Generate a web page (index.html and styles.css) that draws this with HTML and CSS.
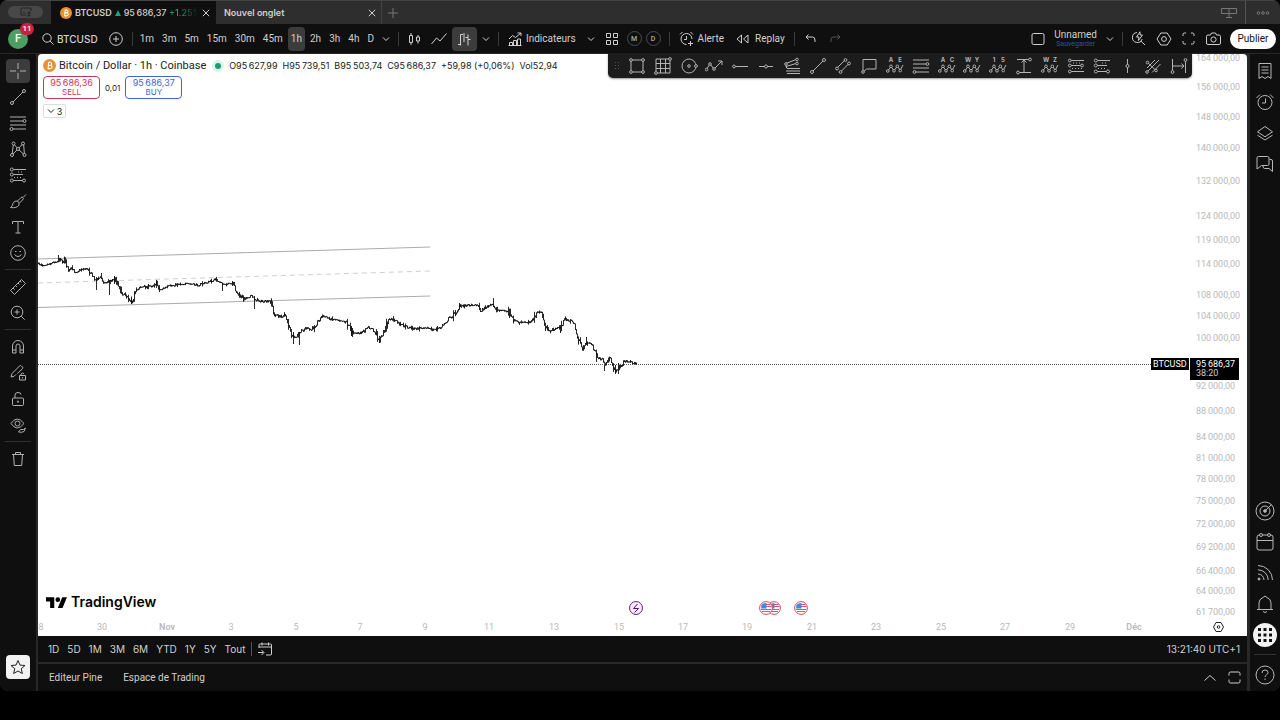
FILE: index.html
```html
<!DOCTYPE html>
<html lang="fr">
<head>
<meta charset="utf-8">
<title>BTCUSD 95 686,37</title>
<link rel="stylesheet" href="styles.css">
</head>
<body>
<svg class="defs" aria-hidden="true">
  <symbol id="chev" viewBox="0 0 8 8"><path d="M1 2.500l3 3 3-3"/></symbol>
  <symbol id="close" viewBox="0 0 8 8"><path d="M.8.8l6.400 6.400M7.200.8L.8 7.200"/></symbol>
  <symbol id="wave" viewBox="0 0 18 18"><path d="M1.500 14.200L5 9.600l3 4 3.400-4.400 2.800 4L17 8"/><g class="dot"><circle cx="1.800" cy="14" r="1.300"/><circle cx="5" cy="9.300" r="1.300"/><circle cx="8" cy="13.800" r="1.300"/><circle cx="11.300" cy="9.300" r="1.300"/><circle cx="14.200" cy="13.600" r="1.300"/></g></symbol>
  <symbol id="fib" viewBox="0 0 18 18"><path d="M1 3h16M1 7h13M1 11h16M4 15h13"/><g class="dot"><circle cx="15.500" cy="7" r="1.500"/><circle cx="2.500" cy="15" r="1.500"/></g></symbol>
  <symbol id="trend" viewBox="0 0 18 18"><path d="M3.500 14.500l11-11"/><g class="dot"><circle cx="3" cy="15" r="1.500"/><circle cx="15" cy="3" r="1.500"/></g></symbol>
  <symbol id="proj" viewBox="0 0 18 18"><path d="M4 3.500h13M4 8.500h10M4 14.500h10"/><path d="M5 11.500h9M9 6h6" stroke-dasharray="1 2"/><g class="dot"><circle cx="2.800" cy="3.500" r="1.500"/><circle cx="2.800" cy="8.500" r="1.500"/><circle cx="2.800" cy="14.500" r="1.500"/><circle cx="15" cy="14.500" r="1.500"/></g></symbol>
  <symbol id="hex" viewBox="0 0 16 16"><path d="M4.800 2h6.400L15 8l-3.800 6H4.800L1 8z"/><circle cx="8" cy="8" r="2.400"/></symbol>
  <symbol id="btc" viewBox="0 0 12 12"><circle cx="6" cy="6" r="6" fill="#e8922e" stroke="none"/><path d="M4.800 3.200h1.900a1.200 1.200 0 010 2.600H4.600h2.300a1.400 1.400 0 010 2.900H4.200M5.200 3.200L4.700 8.700M6.200 2.200v1M5.600 8.700v1" stroke="#fff"/></symbol>
  <symbol id="flag" viewBox="0 0 14 14"><circle cx="7" cy="7" r="6.400" fill="#fff" stroke="#d9485c"/><path d="M7 3.500h4.500M7 5.500h5.500M2 8.500h10M3 10.500h8" stroke="#e0526a"/><path d="M2.500 3.800Q4 2 7.500 2v5.500H2z" fill="#3f8ae0" stroke="none"/></symbol>
</svg>

<div class="app">
  <header class="tabs">
    <button class="home" aria-label="Fenêtres"><svg width="12" height="10" viewBox="0 0 12 10"><path d="M11 4V1H1v7h5M3 5.500h2"/><circle cx="9" cy="6" r="1.200"/><path d="M7 9.500q2-3 4 0"/></svg></button>
    <div class="tab active">
      <svg width="12" height="12"><use href="#btc"/></svg>
      <span>BTCUSD</span><i class="up"></i><span class="tabprice">95&#8201;686,37 <em>+1.25%</em></span>
      <button class="x" aria-label="Fermer"><svg width="8" height="8"><use href="#close"/></svg></button>
    </div>
    <div class="tab other"><span class="grow">Nouvel onglet</span>
      <button class="x" aria-label="Fermer"><svg width="8" height="8"><use href="#close"/></svg></button>
    </div>
    <button class="newtab" aria-label="Nouvel onglet"><svg width="10" height="10" viewBox="0 0 10 10"><path d="M5 0v10M0 5h10"/></svg></button>
    <span class="grow"></span>
    <button class="layout" aria-label="Disposition"><svg width="16" height="12" viewBox="0 0 16 12"><path d="M.5 1.500h15v5H.5zM8 1.500v9M5 10.500h6"/></svg></button>
    <button class="more" aria-label="Plus"><svg width="14" height="6" viewBox="0 0 14 6"><circle cx="2.500" cy="3" r="1.300"/><circle cx="7" cy="3" r="1.300"/><circle cx="11.500" cy="3" r="1.300"/></svg></button>
  </header>

  <nav class="bar">
    <button class="avatar" aria-label="Profil">F<b>11</b></button>
    <button class="symbol"><svg width="12" height="12" viewBox="0 0 12 12"><circle cx="5" cy="5" r="4.200"/><path d="M8 8l3.500 3.500"/></svg>BTCUSD</button>
    <button class="ib" aria-label="Comparer"><svg width="14" height="14" viewBox="0 0 14 14"><circle cx="7" cy="7" r="6.300"/><path d="M7 4v6M4 7h6"/></svg></button>
    <i class="sep"></i>
    <div class="intervals">
      <button>1m</button><button>3m</button><button>5m</button><button>15m</button><button>30m</button><button>45m</button><button class="on">1h</button><button>2h</button><button>3h</button><button>4h</button><button>D</button>
    </div>
    <button class="cv" aria-label="Intervalles"><svg width="8" height="8"><use href="#chev"/></svg></button>
    <i class="sep"></i>
    <button class="ib" aria-label="Bougies"><svg width="14" height="16" viewBox="0 0 14 16"><path d="M2.500 4.500h3v7h-3zM4 2v2.500M4 11.500V14M9.500 6h3v4h-3zM11 4v2M11 10v2.500"/></svg></button>
    <button class="ib" aria-label="Ligne"><svg width="16" height="12" viewBox="0 0 16 12"><path d="M.5 11l5-6 3.500 3 6.500-7.500"/></svg></button>
    <button class="ib on" aria-label="Barres"><svg width="14" height="14" viewBox="0 0 14 14"><path d="M1 12.500h2.500M3.500 13.500V2.500M3.500 2.500H6M7 1v9M11 2.500v11M8.500 5.500H11M11 7.500h2.500"/></svg></button>
    <button class="cv" aria-label="Style"><svg width="8" height="8"><use href="#chev"/></svg></button>
    <i class="sep"></i>
    <button class="txt"><svg width="14" height="14" viewBox="0 0 14 14"><path d="M1 7l3.500-3.500 3 2L13 1M9.500 1H13v3M1.500 13.500v-3h3v3M5.500 13.500v-5h3v5M9.500 13.500V7h3v6.500M.5 13.500h13"/></svg>Indicateurs</button>
    <button class="cv" aria-label="Favoris"><svg width="8" height="8"><use href="#chev"/></svg></button>
    <button class="ib" aria-label="Modèles"><svg width="12" height="12" viewBox="0 0 12 12"><path d="M.5.5h4v4h-4zM7.500.5h4v4h-4zM.5 7.500h4v4h-4zM7.500 7.500h4v4h-4z"/></svg></button>
    <div class="rounds"><button class="round">M</button><button class="round">D</button></div>
    <i class="sep"></i>
    <button class="txt"><svg width="15" height="15" viewBox="0 0 15 15"><path d="M13 8A5.500 5.500 0 107.500 13.500M7.500 5v3.500H5M1 3.500L3.500 1M11.500 1L14 3.500M11.500 10v5M9 12.500h5"/></svg>Alerte</button>
    <button class="txt replay"><svg width="13" height="10" viewBox="0 0 13 10"><path d="M5.500 1v8L1 5zM12 1v8L7.500 5z"/></svg>Replay</button>
    <i class="sep"></i>
    <button class="ib" aria-label="Annuler"><svg width="11" height="10" viewBox="0 0 11 10"><path d="M3.500.5L1 3l2.500 2.500M1 3h6.500q2.500 0 2.500 3v2"/></svg></button>
    <button class="ib dim" aria-label="Rétablir"><svg width="11" height="10" viewBox="0 0 11 10"><path d="M7.500.5L10 3 7.500 5.500M10 3H3.500Q1 3 1 6v2"/></svg></button>
    <span class="grow"></span>
    <button class="ib" aria-label="Disposition"><svg width="14" height="14" viewBox="0 0 14 14"><rect x="1" y="1.500" width="12" height="11" rx="1.500"/></svg></button>
    <button class="save">Unnamed<small>Sauvegarder</small></button>
    <button class="cv" aria-label="Dispositions"><svg width="8" height="8"><use href="#chev"/></svg></button>
    <i class="sep"></i>
    <button class="ib" aria-label="Recherche rapide"><svg width="15" height="15" viewBox="0 0 15 15"><path d="M6 1.500a5 5 0 105.200 6.500M9.800 10L14 14M9 .8L5.500 6H8l-.6 3.500L11.500 4H9z"/></svg></button>
    <button class="ib" aria-label="Paramètres"><svg width="16" height="16"><use href="#hex"/></svg></button>
    <button class="ib" aria-label="Plein écran"><svg width="13" height="13" viewBox="0 0 13 13"><path d="M1 4V2.500Q1 1 2.500 1H4M9 1h1.500Q12 1 12 2.500V4M12 9v1.500q0 1.500-1.500 1.500H9M4 12H2.500Q1 12 1 10.500V9"/></svg></button>
    <button class="ib" aria-label="Capture"><svg width="15" height="13" viewBox="0 0 15 13"><path d="M2 3h2.500l1-2h4l1 2H13q1.500 0 1.500 1.500V11q0 1.500-1.500 1.500H2Q.5 12.500.5 11V4.500Q.5 3 2 3z"/><circle cx="7.500" cy="7.500" r="2.600"/></svg></button>
    <button class="publish">Publier</button>
  </nav>

  <div class="body">
    <aside class="left">
      <button class="on" aria-label="Curseur"><svg width="18" height="18" viewBox="0 0 18 18"><path d="M9 1v6M9 11v6M1 9h6M11 9h6"/></svg></button>
      <button aria-label="Lignes"><svg width="18" height="18"><use href="#trend"/></svg></button>
      <button aria-label="Fibonacci"><svg width="18" height="18"><use href="#fib"/></svg></button>
      <button aria-label="Figures"><svg width="18" height="18" viewBox="0 0 18 18"><path d="M3 15L4.500 3.500 9 9l5.500-6L15.500 15 9 9z"/><g class="dot"><circle cx="3" cy="15" r="1.500"/><circle cx="4.500" cy="3.500" r="1.500"/><circle cx="9" cy="9" r="1.500"/><circle cx="14" cy="3.500" r="1.500"/><circle cx="15.500" cy="15" r="1.500"/></g></svg></button>
      <button aria-label="Prévisions"><svg width="18" height="18"><use href="#proj"/></svg></button>
      <button aria-label="Pinceau"><svg width="18" height="18" viewBox="0 0 18 18"><path d="M1.500 15.500q2-1 2.500-4 1-3 4-2.500 3 1 2 4-2 3.500-8.500 2.500zM8.500 9L12 5.500q1-1 2 0t-.5 2.500L10.500 11M14.500 5l2.500-2.500"/></svg></button>
      <button aria-label="Texte"><svg width="18" height="18" viewBox="0 0 18 18"><path d="M3.500 6V3.500h11V6M9 3.500v11.500M6.500 15h5"/></svg></button>
      <button aria-label="Icônes"><svg width="18" height="18" viewBox="0 0 18 18"><circle cx="9" cy="9" r="7.300"/><path d="M5.500 10.500q3.500 4 7 0M6 7.500h1.500M10.500 7.500H12"/></svg></button>
      <i></i>
      <button aria-label="Mesure"><svg width="18" height="18" viewBox="0 0 18 18"><path d="M1.500 12.500l11-11 4 4-11 11zM4 10l1.500 1.500M6.500 7.500L8 9M9 5l1.500 1.500M11 3l1.500 1.500"/></svg></button>
      <button aria-label="Zoom"><svg width="18" height="18" viewBox="0 0 18 18"><circle cx="8" cy="8" r="5.800"/><path d="M12.200 12.200l3.500 3.500M8 5.500v5M5.500 8h5"/></svg></button>
      <i></i>
      <button aria-label="Aimant"><svg width="18" height="18" viewBox="0 0 18 18"><path d="M3.500 15V8a5.500 5.500 0 0111 0v7h-3.500V8a2 2 0 00-4 0v7zM3.500 12H7M11 12h3.500"/></svg></button>
      <button aria-label="Mode dessin"><svg width="18" height="18" viewBox="0 0 18 18"><path d="M2 13l1-3.500L10.500 2q1-1 2 0l.8.800q1 1 0 2L8.500 9.600M2 13l3-.6 2-2M10.500 11.500h6V16h-6zM12 11.500V10q1.500-2 3 0M13.500 13v1.500"/></svg></button>
      <button aria-label="Verrouiller"><svg width="18" height="18" viewBox="0 0 18 18"><rect x="3.500" y="8" width="11" height="7.500" rx="1"/><path d="M6 8V5q0-2.500 3-2.500T12 4.500"/><circle cx="9" cy="11.700" r=".7"/></svg></button>
      <button aria-label="Masquer"><svg width="18" height="18" viewBox="0 0 18 18"><path d="M2 7.500q6-9 13 0-7 9-13 0z"/><circle cx="8.500" cy="7.500" r="2.500"/><path d="M9.500 16l2-2.500h3l2-1.500-1.500 3.500-2.500.8z"/></svg></button>
      <i></i>
      <button aria-label="Supprimer"><svg width="18" height="18" viewBox="0 0 18 18"><path d="M3 4.500h12M6.500 4.500V2.500h5v2M4.500 4.500l.8 11h7.400l.8-11"/></svg></button>
      <span class="grow"></span>
      <button class="star" aria-label="Favoris"><svg width="16" height="16" viewBox="0 0 16 16"><path d="M8 1.500l2 4.600 5 .4-3.800 3.200 1.200 4.800L8 12l-4.400 2.500 1.200-4.800L1 6.500l5-.4z"/></svg></button>
    </aside>

    <main>
      <section class="chart">
        <svg class="plot">
          <g transform="translate(-38 -54)">
            <path class="channel" d="M38 259L430 247M38 307.500L430 296"/>
            <path class="mid" d="M38 283L430 271"/>
            <line class="last" x1="38" x2="100%" y1="364.500" y2="364.500"/>
            <path id="bars" class="bars"/>
            <g class="logo"><path transform="translate(46 595) scale(.59)" d="M14 22H7V11H0V4h14zM28 22h-8l7.500-18h8zM24 8a4 4 0 11-8 0 4 4 0 018 0z"/><text x="71" y="607">TradingView</text></g>
            <circle cx="636" cy="608" r="6.500" fill="#f6eafa" stroke="#6b2482"/><path d="M637.500 604l-4 4.500h5l-4 4" fill="none" stroke="#4a1560"/>
            <use href="#flag" x="767" y="601" width="14" height="14"/><use href="#flag" x="759" y="601" width="14" height="14"/><use href="#flag" x="794" y="601" width="14" height="14"/>
            <g class="tick mid-anchor"><text x="41" y="630">8</text><text x="102" y="630">30</text><text x="167" y="630" class="month">Nov</text><text x="231" y="630">3</text><text x="296" y="630">5</text><text x="360" y="630">7</text><text x="425" y="630">9</text><text x="489" y="630">11</text><text x="554" y="630">13</text><text x="619" y="630">15</text><text x="683" y="630">17</text><text x="747" y="630">19</text><text x="812" y="630">21</text><text x="876" y="630">23</text><text x="941" y="630">25</text><text x="1005" y="630">27</text><text x="1070" y="630">29</text><text x="1134" y="630" class="month">Déc</text></g>
          </g>
          <svg x="100%" y="304" overflow="visible"><rect x="-39" width="38" height="12"/><text class="tag" x="-37" y="9">BTCUSD</text></svg>
        </svg>
        <svg class="axis">
          <g transform="translate(-1190 -54)">
            <g class="tick"><text x="1196" y="61">164&#8201;000,00</text><text x="1196" y="90">156&#8201;000,00</text><text x="1196" y="120">148&#8201;000,00</text><text x="1196" y="151">140&#8201;000,00</text><text x="1196" y="184">132&#8201;000,00</text><text x="1196" y="219">124&#8201;000,00</text><text x="1196" y="243">119&#8201;000,00</text><text x="1196" y="267">114&#8201;000,00</text><text x="1196" y="298">108&#8201;000,00</text><text x="1196" y="319">104&#8201;000,00</text><text x="1196" y="341">100&#8201;000,00</text><text x="1196" y="389">92&#8201;000,00</text><text x="1196" y="414">88&#8201;000,00</text><text x="1196" y="440">84&#8201;000,00</text><text x="1196" y="461">81&#8201;000,00</text><text x="1196" y="482">78&#8201;000,00</text><text x="1196" y="504">75&#8201;000,00</text><text x="1196" y="527">72&#8201;000,00</text><text x="1196" y="550">69&#8201;200,00</text><text x="1196" y="574">66&#8201;400,00</text><text x="1196" y="594">64&#8201;000,00</text><text x="1196" y="615">61&#8201;700,00</text></g>
            <rect x="1190" y="358" width="49" height="22"/><text class="tag" x="1196" y="367">95&#8201;686,37</text><text class="tag soft" x="1196" y="376">38:20</text>
            <g fill="none" stroke="#222"><path d="M1216 622.500h5l2.500 4.500-2.500 4.500h-5l-2.500-4.500z"/><circle cx="1218.500" cy="627" r="1.300"/></g>
          </g>
        </svg>
        <div class="legend">
          <div class="title"><svg width="13" height="13"><use href="#btc"/></svg><h1>Bitcoin / Dollar · 1h · Coinbase</h1><i class="live"></i>
            <p><span>O95&#8201;627,99</span><span>H95&#8201;739,51</span><span>B95&#8201;503,74</span><span>C95&#8201;686,37</span><span>+59,98 (+0,06%)</span><span>Vol52,94</span></p></div>
          <div class="trade"><button class="sell">95&#8201;686,36<small>SELL</small></button><span>0,01</span><button class="buy">95&#8201;686,37<small>BUY</small></button></div>
          <button class="fold"><svg width="8" height="8"><use href="#chev"/></svg>3</button>
        </div>
        <div class="float">
          <span class="grip"></span>
          <button aria-label="Rectangle"><svg width="18" height="18" viewBox="0 0 18 18"><path d="M3 3h12v12H3z"/><g class="dot"><circle cx="3" cy="3" r="1.400"/><circle cx="15" cy="3" r="1.400"/><circle cx="3" cy="15" r="1.400"/><circle cx="15" cy="15" r="1.400"/></g></svg></button>
          <button aria-label="Grille"><svg width="18" height="18" viewBox="0 0 18 18"><path d="M2 2h14v14H2zM2 6.500h14M2 11.500h14M6.500 2v14M11.500 2v14"/><g class="dot"><circle cx="2" cy="16" r="1.400"/><circle cx="16" cy="2" r="1.400"/></g></svg></button>
          <button aria-label="Cercle"><svg width="18" height="18" viewBox="0 0 18 18"><circle cx="9" cy="9" r="7"/><g class="dot"><circle cx="9" cy="9" r="1.300"/><circle cx="16" cy="9" r="1.400"/></g></svg></button>
          <button aria-label="Tracé"><svg width="18" height="18" viewBox="0 0 18 18"><path d="M1 13l4-6 4 5 8-8M13 4h4v4"/><g class="dot"><circle cx="1.500" cy="12.500" r="1.300"/><circle cx="5" cy="7" r="1.300"/><circle cx="9" cy="12" r="1.300"/></g></svg></button>
          <button aria-label="Rayon"><svg width="18" height="18" viewBox="0 0 18 18"><path d="M3 9.500h14"/><g class="dot"><circle cx="3" cy="9.500" r="1.400"/></g></svg></button>
          <button aria-label="Ligne horizontale"><svg width="18" height="18" viewBox="0 0 18 18"><path d="M2 9.500h14"/><g class="dot"><circle cx="9" cy="9.500" r="1.500"/></g></svg></button>
          <button aria-label="Éventail"><svg width="18" height="18" viewBox="0 0 18 18"><path d="M13 2.500L3 6.500v3l10-3M3 9.500l1 2h13M3 14h14M4 16.500h13"/><g class="dot"><circle cx="14" cy="2.500" r="1.300"/><circle cx="14" cy="6.500" r="1.300"/><circle cx="3" cy="7" r="1.300"/></g></svg></button>
          <button aria-label="Tendance"><svg width="18" height="18"><use href="#trend"/></svg></button>
          <button aria-label="Canal"><svg width="18" height="18" viewBox="0 0 18 18"><path d="M2.500 11.500l9-9M6 15.500l9-9"/><g class="dot"><circle cx="3" cy="11.500" r="1.400"/><circle cx="11.500" cy="3" r="1.400"/><circle cx="6.500" cy="15" r="1.400"/><circle cx="15" cy="6.500" r="1.400"/></g></svg></button>
          <button aria-label="Légende"><svg width="18" height="18" viewBox="0 0 18 18"><path d="M3 15V2.500h13V12H6.500z"/><g class="dot"><circle cx="3" cy="15" r="1.300"/></g></svg></button>
          <button aria-label="Vague AE"><svg width="18" height="18"><use href="#wave"/><text x="5" y="5">A</text><text x="14" y="5">E</text></svg></button>
          <button aria-label="Retracement"><svg width="18" height="18" viewBox="0 0 18 18"><path d="M1 3h16M1 7h14M1 11h16M3 15h14"/><g class="dot"><circle cx="15.500" cy="7" r="1.400"/><circle cx="2.500" cy="15" r="1.400"/></g></svg></button>
          <button aria-label="Vague AC"><svg width="18" height="18"><use href="#wave"/><text x="5" y="5">A</text><text x="14" y="5">C</text></svg></button>
          <button aria-label="Vague WY"><svg width="18" height="18"><use href="#wave"/><text x="5" y="5">W</text><text x="14" y="5">Y</text></svg></button>
          <button aria-label="Vague 15"><svg width="18" height="18"><use href="#wave"/><text x="5" y="5">1</text><text x="14" y="5">5</text></svg></button>
          <button aria-label="Prix"><svg width="18" height="18" viewBox="0 0 18 18"><path d="M2 2.500h12M4 15.500h12M9 3v12M6.500 5.500L9 3l2.500 2.500"/><g class="dot"><circle cx="15" cy="2.500" r="1.400"/><circle cx="3" cy="15.500" r="1.400"/></g></svg></button>
          <button aria-label="Vague WZ"><svg width="18" height="18"><use href="#wave"/><text x="5" y="5">W</text><text x="14" y="5">Z</text></svg></button>
          <button aria-label="Position longue"><svg width="18" height="18" viewBox="0 0 18 18"><path d="M4 3.500h13M4 8.500h10M4 14.500h13"/><path d="M5 11.500h10M6 6h9" stroke-dasharray="1 2"/><g class="dot"><circle cx="2.800" cy="3.500" r="1.400"/><circle cx="2.800" cy="8.500" r="1.400"/><circle cx="2.800" cy="14.500" r="1.400"/><circle cx="15" cy="8.500" r="1.400"/></g></svg></button>
          <button aria-label="Position courte"><svg width="18" height="18"><use href="#proj"/></svg></button>
          <button aria-label="Ligne verticale"><svg width="18" height="18" viewBox="0 0 18 18"><path d="M9.500 2v14"/><g class="dot"><circle cx="9.500" cy="9" r="1.500"/></g></svg></button>
          <button aria-label="Fourchette"><svg width="18" height="18" viewBox="0 0 18 18"><path d="M2.500 15.500L15 3M3 5l9.500 9M3 11l8-8M8 15.500l8.500-8.500"/><g class="dot"><circle cx="3.500" cy="5.500" r="1.300"/><circle cx="12" cy="13.500" r="1.300"/><circle cx="3" cy="15" r="1.300"/></g></svg></button>
          <button aria-label="Plage de dates"><svg width="18" height="18" viewBox="0 0 18 18"><path d="M2.500 2v12M15.500 4v12M3 9h11M11.500 6.500L14 9l-2.500 2.500"/><g class="dot"><circle cx="2.500" cy="15" r="1.400"/><circle cx="15.500" cy="3" r="1.400"/></g></svg></button>
        </div>
      </section>

      <footer class="range">
        <div class="spans"><button>1D</button><button>5D</button><button>1M</button><button>3M</button><button>6M</button><button>YTD</button><button>1Y</button><button>5Y</button><button>Tout</button></div>
        <i class="sep"></i>
        <button aria-label="Aller à"><svg width="14" height="14" viewBox="0 0 14 14"><path d="M1 6V3q0-1 1-1h10.500q1 0 1 1v9q0 1-1 1H8M1 5h12.500M4 .5v3M10.500.5v3M0 10.500h5.500M3.500 8l2.500 2.500L3.500 13"/></svg></button>
        <span class="grow"></span><button>13:21:40 UTC+1</button>
      </footer>
      <footer class="panel">
        <button>Editeur Pine</button><button>Espace de Trading</button><span class="grow"></span>
        <button aria-label="Ouvrir"><svg width="12" height="8" viewBox="0 0 12 8"><path d="M.5 6.500L6 1.500l5.500 5"/></svg></button>
        <button aria-label="Agrandir"><svg width="13" height="13" viewBox="0 0 13 13"><path d="M1 4.500V2.500Q1 1 2.500 1h8Q12 1 12 2.500v2M12 8.500v2q0 1.500-1.500 1.500h-8Q1 12 1 10.500v-2"/></svg></button>
      </footer>
    </main>

    <aside class="right">
      <button aria-label="Liste"><svg width="20" height="20" viewBox="0 0 20 20"><path d="M4 2.500h12v15l-3-2-3 2-3-2-3 2zM6.500 6h7M6.500 9h7M6.500 12h7"/></svg></button>
      <button aria-label="Alertes"><svg width="20" height="20" viewBox="0 0 20 20"><circle cx="10" cy="10.500" r="7"/><path d="M10.500 6.500V11H7M1.500 6L5 2.500M15 2.500L18.500 6"/></svg></button>
      <button aria-label="Objets"><svg width="20" height="20" viewBox="0 0 20 20"><path d="M10 3.500l7.500 5.300-7.500 5L2.500 8.800zM2.500 12.200L10 17l7.500-4.800"/></svg></button>
      <button aria-label="Discussions"><svg width="20" height="20" viewBox="0 0 20 20"><path d="M3.500 2.500h9q1.500 0 1.500 1.500v6q0 1.500-1.500 1.500H6.500L2 15V4q0-1.500 1.500-1.500zM14.500 5.500H16q1.500 0 1.500 1.500v10.500L14 14.500H9.500Q8 14.500 8 12"/></svg></button>
      <span class="grow"></span>
      <button aria-label="Screener"><svg width="20" height="20" viewBox="0 0 20 20"><circle cx="10" cy="10" r="9"/><circle cx="10" cy="10" r="5"/><circle cx="10" cy="10" r="1.300" fill="currentColor"/><path d="M10 10l6.500-6.500"/></svg></button>
      <button aria-label="Calendrier"><svg width="20" height="20" viewBox="0 0 20 20"><rect x="2" y="3" width="16" height="15" rx="2"/><path d="M2 8.500h16"/><g class="dot"><circle cx="6" cy="3" r="1.500"/><circle cx="14" cy="3" r="1.500"/></g></svg></button>
      <button aria-label="Actualités"><svg width="20" height="20" viewBox="0 0 20 20"><path d="M3 2.500A14.500 14.500 0 0117.500 17M3 6.800A10.200 10.200 0 0113.200 17M3 11a6 6 0 016 6"/><circle cx="4" cy="16" r="1" fill="currentColor"/></svg></button>
      <button aria-label="Notifications"><svg width="20" height="20" viewBox="0 0 20 20"><path d="M2 15.500h16M4 15.500V9q0-4 4-5.500 2-3 4 0 4 1.500 4 5.500v6.500M8 17.500q2 2 4 0"/></svg></button>
      <button class="apps" aria-label="Produits"><svg width="14" height="14" viewBox="0 0 14 14"><path d="M0 0h3v3H0zM5.500 0h3v3h-3zM11 0h3v3h-3zM0 5.500h3v3H0zM5.500 5.500h3v3h-3zM11 5.500h3v3h-3zM0 11h3v3H0zM5.500 11h3v3h-3zM11 11h3v3h-3z"/></svg></button>
      <i></i>
      <button aria-label="Aide"><svg width="20" height="20" viewBox="0 0 20 20"><circle cx="10" cy="10" r="9"/><path d="M7 8q0-3 3-3t3 2.500c0 2.300-3 2.300-3 4.500M10 13.500v1.500"/></svg></button>
    </aside>
  </div>
</div>
<script src="chart.js"></script>
</body>
</html>
```
FILE: styles.css
```css
* { box-sizing: border-box; }
body { margin: 0; min-height: 100vh; padding-bottom: 29px; display: flex; background: #000; font-family: Inter, "Liberation Sans", sans-serif; color: #d0d0d0; }
button { font: inherit; color: inherit; background: none; border: 0; padding: 0; margin: 0; display: flex; align-items: center; justify-content: center; white-space: nowrap; flex-shrink: 0; }
svg { fill: none; stroke: currentColor; flex-shrink: 0; display: block; }
svg text { stroke: none; }
.defs { position: absolute; width: 0; height: 0; }
.dot { fill: #0f0f0f; }
.grow { flex: 1; }
.app { flex: 1; display: flex; flex-direction: column; min-width: 0; background: #282828; border-radius: 8px; overflow: hidden; }

.tabs { height: 24px; display: flex; align-items: stretch; font-size: 9px; font-weight: 600; background: #2e2e2e; border-top: 1px solid #444; }
.home { width: 35px; height: 12px; margin: 5px 8px; border-radius: 6px; background: #484848; color: #222; }
.tab { display: flex; align-items: center; gap: 3px; }
.active { width: 165px; padding: 0 6px 0 9px; background: #0f0f0f; }
.up { border: 3px solid transparent; border-top: 0; border-bottom: 6px solid #22a079; }
.tabprice { flex: 1; width: 0; white-space: nowrap; font-weight: 500; }
.tabprice em { font-style: normal; background: linear-gradient(90deg, #22a079 30%, #0f0f0f 95%); -webkit-background-clip: text; background-clip: text; color: transparent; }
.other { width: 165px; padding: 0 5px 0 8px; }
.newtab { width: 23px; border-left: 1px solid #444; color: #777; }
.layout { padding: 0 8px; color: #777; border-right: 1px solid #555; }
.more { width: 34px; color: #777; }

.bar { height: 29px; padding: 0 4px 0 8px; display: flex; align-items: center; font-family: Roboto, "Liberation Sans", sans-serif; font-size: 10px; font-weight: 400; background: #0f0f0f; }
.avatar { position: relative; width: 20px; height: 20px; border-radius: 50%; background: #4d9e63; color: #fff; font-size: 11px; font-weight: 500; }
.avatar b { position: absolute; top: -6px; right: -6px; width: 14px; height: 12px; border-radius: 6px; background: #c9203f; font-size: 8px; line-height: 12px; font-weight: 500; }
.symbol { gap: 3px; margin: 0 6px 0 14px; font-family: Inter, sans-serif; font-weight: 500; }
.ib { width: 25px; height: 24px; border-radius: 4px; }
.on { background: #3c3c3c; border-radius: 4px; }
.dim { color: #555; }
.cv { width: 18px; height: 24px; }
.sep { width: 1px; height: 14px; margin: 0 3px; background: #3a3a3a; flex-shrink: 0; }
.intervals { display: flex; gap: 2px; margin-left: 1px; }
.intervals button { padding: 0 3px; height: 24px; }
.txt { gap: 4px; padding: 0 6px; }
.replay { gap: 6px; }
.rounds { display: flex; gap: 4px; padding: 0 5px 0 2px; }
.round { width: 15px; height: 15px; border: 1px solid #4a4a4a; border-radius: 50%; font-size: 7px; font-weight: 500; color: #aaa; }
.save { flex-direction: column; padding: 0 4px; line-height: 10px; }
.save small { font-size: 7px; line-height: 8px; color: #2b4fae; }
.publish { width: 46px; height: 20px; margin-left: 4px; border-radius: 10px; background: #fff; color: #111; }

.body { flex: 1; display: flex; padding-top: 1px; min-height: 0; }
.left { width: 36px; padding: 5px 0 12px; display: flex; flex-direction: column; align-items: center; gap: 2px; background: #0f0f0f; color: #b0b0b0; }
.left button { width: 24px; height: 24px; }
.left i { width: 26px; height: 1px; margin: 2px 0 3px; background: #303030; }
.left .star { border-radius: 4px; background: #f2f2f2; color: #222; }
.right { width: 30px; margin-left: 3px; padding: 1px 0; display: flex; flex-direction: column; align-items: center; background: #0f0f0f; color: #b8b8b8; }
.right button { width: 24px; height: 31px; }
.right .apps { height: 24px; margin: 4px 0 7px; border-radius: 50%; background: #f2f2f2; color: #111; }
.apps svg { fill: currentColor; stroke: none; }
.right i { width: 22px; height: 1px; margin-bottom: 4px; background: #333; }

main { flex: 1; min-width: 0; margin-left: 2px; display: flex; flex-direction: column; }
.chart { position: relative; flex: 1; display: flex; background: #fff; border-radius: 4px 4px 0 0; min-height: 0; }
.plot { flex: 1; min-width: 0; width: 0; height: 100%; }
.axis { width: 57px; height: 100%; }
.plot, .axis { font-family: Roboto, "Liberation Sans", sans-serif; }
.plot rect, .axis rect { fill: #000; stroke: none; }
.channel { stroke: #ababab; stroke-width: 1; }
.mid { stroke: #cfcfcf; stroke-dasharray: 5 4; }
.last { stroke: #555; stroke-dasharray: 1 1; }
.bars { stroke: #111; stroke-width: .9; }
.tick { fill: #b9b9b9; font-size: 9px; }
.mid-anchor { text-anchor: middle; }
.month { font-weight: 600; }
.tag { fill: #fff; font-size: 9px; }
.soft { fill: #ccc; }
.logo { fill: #000; stroke: none; font-family: Inter, sans-serif; font-size: 14px; font-weight: 600; }
.legend { position: absolute; left: 5px; top: 4px; color: #222; }
.title { display: flex; align-items: center; height: 15px; gap: 3px; }
.title h1 { margin: 0; font-family: Roboto, "Liberation Sans", sans-serif; font-size: 11px; font-weight: 400; white-space: nowrap; }
.live { width: 6px; height: 6px; margin: 0 5px 0 6px; border-radius: 50%; background: #1a9b74; box-shadow: 0 0 0 3px #d8f3ea; }
.title p { display: flex; gap: 5px; margin: 0; font-size: 9px; white-space: nowrap; }
.trade { display: flex; align-items: center; gap: 5px; margin-top: 3px; font-size: 8px; }
.trade button { width: 57px; height: 23px; flex-direction: column; border: 1px solid; border-radius: 4px; font-size: 9px; line-height: 10px; }
.trade small { font-size: 8px; line-height: 9px; }
.trade .sell { color: #c8375a; }
.trade .buy { color: #4564cf; }
.fold { gap: 2px; width: 23px; height: 14px; margin-top: 5px; border: 1px solid #ddd; border-radius: 2px; font-size: 9px; }
.float { position: absolute; right: 55px; top: -1px; width: 584px; height: 25px; padding-left: 6px; display: flex; align-items: center; background: #1c1c1c; border-radius: 0 0 5px 5px; box-shadow: 0 1px 2px #0006; color: #b4b4b4; }
.float button { flex: 1; height: 24px; }
.float .dot { fill: #1c1c1c; }
.float text { fill: currentColor; font-size: 6px; font-weight: 700; text-anchor: middle; }
.grip { width: 6px; height: 9px; margin-right: 4px; background: radial-gradient(circle, #555 1px, transparent 1px) 0 0 / 3px 3px; }

.range, .panel { display: flex; align-items: center; background: #0f0f0f; font-size: 10px; }
.range { height: 26px; padding: 0 7px 0 10px; gap: 6px; margin-bottom: 2px; }
.spans { display: flex; gap: 8px; }
.range .sep { margin: 0; background: #555; }
.panel { height: 27px; padding: 0 6px 0 11px; gap: 12px; font-family: Roboto, "Liberation Sans", sans-serif; }
.panel button + button { margin-left: 9px; }
.panel .grow + button + button { margin-left: 0; }
```
FILE: chart.js
```js
// Hourly closes as x,y pairs in chart pixels; bars are interpolated between them.
const closes = [38,264,43,265,48,264,54,262,58,261,60,258,62,262,64,259,66,265,68,271,71,269,75,272,82,269,88,269,92,276,95,280,98,279,100,277,104,283,110,281,114,278,119,287,122,294,127,296,131,302,135,293,139,287,145,287,151,286,156,283,159,290,164,288,170,286,178,284,188,284,198,285,205,283,211,281,216,280,222,284,230,284,233,284,237,294,243,299,250,296,256,300,264,302,271,301,273,314,280,317,285,315,288,325,291,336,295,338,299,333,305,328,311,330,317,322,322,316,330,319,340,320,346,322,352,332,358,334,364,331,369,327,375,333,379,341,384,330,388,320,392,319,400,325,410,328,416,329,425,327,432,330,440,328,447,320,455,313,460,306,470,305,477,305,480,311,486,307,492,305,497,310,506,311,513,320,520,323,532,321,536,313,541,312,544,325,548,331,555,329,560,327,565,319,573,322,577,337,582,349,586,342,592,345,597,358,602,360,605,367,609,357,615,371,620,367,624,361,630,362,637,364];
const wicks = [[58,255,262],[96,277,290],[109,280,295],[114,276,284],[131,298,304],[156,280,288],[159,285,292],[222,283,291],[254,296,309],[232,281,286],[293,332,344],[299,333,345],[352,328,337],[379,336,343],[351,326,336],[459,303,309],[493,298,307],[560,325,333],[586,337,345],[596,352,362],[604,365,371],[615,365,374],[618,363,374]];
let seed = 7;
const rnd = () => (seed = (seed * 16807) % 2147483647) / 2147483647;
let d = "", prev = closes[1];
for (let i = 0; i < closes.length - 2; i += 2) {
  const [x0, y0, x1, y1] = closes.slice(i, i + 4);
  const rough = Math.min(2.8, 1 + Math.abs(y1 - y0) / 5);
  for (let x = x0; x < x1; x += 1) {
    const y = y0 + (y1 - y0) * (x - x0) / (x1 - x0) + (rnd() - .5) * rough * 1.6;
    const wick = rnd() < .25 ? rough * 1.8 : .5;
    const lo = Math.max(prev, y) + rnd() * wick, hi = Math.min(prev, y) - rnd() * wick;
    d += `M${x + .5} ${hi.toFixed(1)}V${lo.toFixed(1)}M${x} ${y.toFixed(1)}h1`;
    prev = y;
  }
}
for (const [x, a, b] of wicks) d += `M${x + .5} ${a}V${b}`;
document.getElementById("bars").setAttribute("d", d);
```
